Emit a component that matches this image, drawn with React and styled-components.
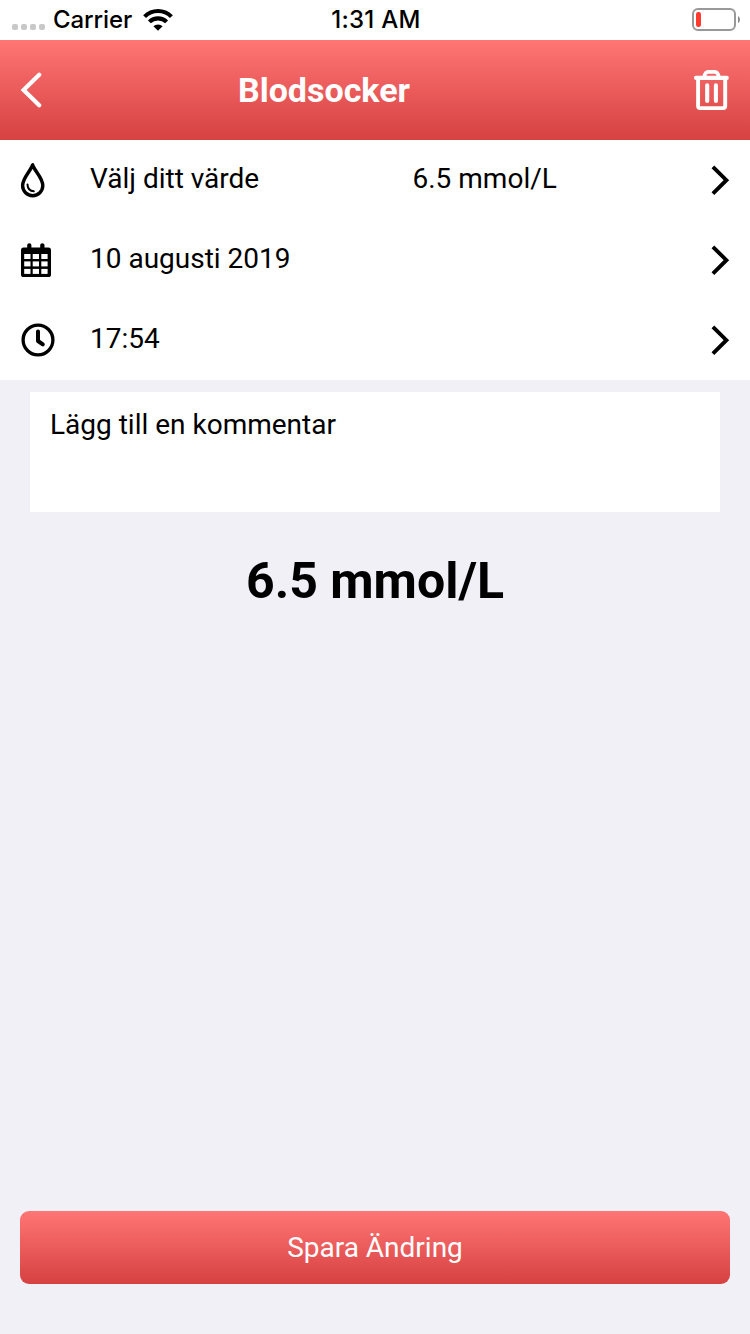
import styled, { createGlobalStyle } from "styled-components";

const GlobalStyle = createGlobalStyle`
  * {
    box-sizing: border-box;
  }
  body {
    margin: 0;
    background: #f1f0f7;
    font-family: Roboto, sans-serif;
    color: #000;
  }
`;

const Screen = styled.div`
  display: flex;
  flex-direction: column;
  width: 750px;
  height: 1334px;
`;

const StatusBar = styled.div`
  display: grid;
  grid-template-columns: 1fr auto 1fr;
  align-items: center;
  height: 40px;
  padding: 0 10px 0 12px;
  background: #fff;
  font-family: Inter, sans-serif;
  font-size: 24px;
  font-weight: 500;
  line-height: 40px;
`;
const StatusLeft = styled.div`
  display: flex;
  align-items: center;
`;
const Signal = styled.div`
  display: flex;
  gap: 3px;
  margin: 14px 8px 0 0;
`;
const Dot = styled.span`
  width: 6px;
  height: 6px;
  border-radius: 2px;
  background: #c8c8c8;
`;
const Carrier = styled.span`
  width: 79px;
  margin-right: 11px;
  letter-spacing: -0.1px;
`;
const Time = styled.span`
  letter-spacing: 0.3px;
`;
const StatusRight = styled.div`
  display: flex;
  justify-content: flex-end;
  margin-bottom: 1px;
`;

const Header = styled.header`
  display: grid;
  grid-template-columns: 1fr auto 1fr;
  align-items: center;
  height: 100px;
  padding: 0 20px;
  background: linear-gradient(#ff7675, #d64141);
  color: #fff;
`;
const Title = styled.h1`
  margin: 0 102px 0 0;
  font-size: 34px;
  font-weight: 700;
  line-height: 40px;
`;
const HeaderIcon = styled.div`
  display: flex;
  justify-content: ${({ $end }) => ($end ? "flex-end" : "flex-start")};
`;

const List = styled.div`
  background: #fff;
`;
const Row = styled.div`
  display: flex;
  align-items: center;
  height: 80px;
  padding: 0 20px;
  font-size: 28px;
`;
const RowIcon = styled.div`
  display: flex;
  width: 70px;
`;
const RowLabel = styled.div`
  width: 322.5px;
  line-height: 34px;
  margin-top: -3px;
`;
const RowValue = styled.div`
  flex: 1;
  line-height: 34px;
  margin-top: -3px;
`;

const Comment = styled.div`
  height: 120px;
  margin: 12px 30px 0;
  padding: 16px 20px;
  background: #fff;
  font-size: 28px;
  line-height: 33px;
`;
const Result = styled.div`
  margin-top: 39px;
  text-align: center;
  font-size: 50px;
  font-weight: 700;
  line-height: 60px;
`;
const SaveButton = styled.button`
  height: 73px;
  margin: auto 20px 50px;
  padding: 0;
  border: 0;
  border-radius: 9px;
  background: linear-gradient(#ff7675, #d64141);
  color: #fff;
  font: 400 28px/73px Roboto, sans-serif;
`;

const WifiIcon = () => (
  <svg width="30" height="22" viewBox="0 0 30 22">
    <path d="M15 21.8 L10.4 17.3 A6.6 6.6 0 0 1 19.6 17.3 Z" />
    <g fill="none" stroke="#000" strokeWidth="4.1">
      <path d="M1.6 7.6 A19 19 0 0 1 28.4 7.6" />
      <path d="M6.4 12.9 A12.2 12.2 0 0 1 23.6 12.9" />
    </g>
  </svg>
);

const BatteryIcon = () => (
  <svg width="48" height="23" viewBox="0 0 48 23">
    <rect x="1" y="1" width="42" height="21" rx="5" fill="none" stroke="#999" strokeWidth="2" />
    <rect x="4" y="4" width="5" height="15" rx="2.2" fill="#ff3b30" />
    <path d="M46 8 Q48 9 48 11.5 Q48 14 46 15 Z" fill="#888" />
  </svg>
);

const BackIcon = () => (
  <svg width="22" height="36" viewBox="0 0 22 36" fill="none" stroke="#fff">
    <path d="M19.2 2.7 L3.6 18 L19.2 33.3" strokeWidth="4.2" strokeLinecap="round" />
  </svg>
);

const TrashIcon = () => (
  <svg width="36" height="42" viewBox="0 0 36 42" fill="none" stroke="#fff">
    <path d="M2 8.9 H32.8" strokeWidth="4.1" strokeLinecap="round" />
    <path d="M10 8.4 C10.8 4.2 12 2.8 14.2 2.8 H20.8 C23 2.8 24.2 4.2 25 8.4" strokeWidth="3.8" />
    <path
      d="M4.1 10 V37 Q4.1 39.1 6.2 39.1 H29.1 Q31.2 39.1 31.2 37 V10"
      strokeWidth="3.9"
    />
    <path d="M13.2 16.2 V32 M21.9 16.2 V32" strokeWidth="4.1" strokeLinecap="round" />
  </svg>
);

const DropIcon = () => (
  <svg width="26" height="36" viewBox="0 0 26 36" fill="none" stroke="#000" strokeLinecap="round">
    <path
      d="M12.6 2.8 C11 8.8 2.6 15.6 2.6 23.6 A10.1 10.1 0 0 0 22.8 23.6 C22.8 15.6 14.2 8.8 12.6 2.8 Z"
      strokeWidth="3.4"
      strokeLinejoin="round"
    />
    <path d="M7.5 22.6 C7.7 26.4 10 29 13.8 29.2" strokeWidth="2" />
  </svg>
);

const CalendarIcon = () => (
  <svg width="32" height="36" viewBox="0 0 32 36">
    <path d="M7.2 3 Q7.2 1.2 9.3 1.2 T11.4 3 V5.6 H20.2 V3 Q20.2 1.2 22.3 1.2 T24.5 3 V5.6 H28.4 Q31 5.6 31 8.2 V32.4 Q31 35 28.4 35 H3.6 Q1 35 1 32.4 V8.2 Q1 5.6 3.6 5.6 H7.2 Z" />
    <g fill="#fff">
      {[12, 19.4, 26.9].map((y) =>
        [4.2, 12.7, 21.3].map((x) => (
          <rect key={`${x}-${y}`} x={x} y={y} width="6.3" height="5" />
        ))
      )}
    </g>
  </svg>
);

const ClockIcon = () => (
  <svg width="36" height="36" viewBox="0 0 36 36" fill="none" stroke="#000">
    <circle cx="18" cy="18" r="14.9" strokeWidth="3.3" />
    <path d="M18 9.5 V19 L22.8 22.4" strokeWidth="4" strokeLinecap="round" strokeLinejoin="round" />
  </svg>
);

const ForwardIcon = () => (
  <svg width="20" height="32" viewBox="0 0 20 32" fill="none" stroke="#000">
    <path d="M2.9 2.8 L16.4 16.2 L2.9 29.6" strokeWidth="3.9" />
  </svg>
);

const rows = [
  { icon: <DropIcon />, label: "Välj ditt värde", value: "6.5 mmol/L" },
  { icon: <CalendarIcon />, label: "10 augusti 2019" },
  { icon: <ClockIcon />, label: "17:54" },
];

const App = () => {
  return (
    <Screen>
      <GlobalStyle />
      <StatusBar>
        <StatusLeft>
          <Signal>
            <Dot />
            <Dot />
            <Dot />
            <Dot />
          </Signal>
          <Carrier>Carrier</Carrier>
          <WifiIcon />
        </StatusLeft>
        <Time>1:31 AM</Time>
        <StatusRight>
          <BatteryIcon />
        </StatusRight>
      </StatusBar>
      <Header>
        <HeaderIcon>
          <BackIcon />
        </HeaderIcon>
        <Title>Blodsocker</Title>
        <HeaderIcon $end>
          <TrashIcon />
        </HeaderIcon>
      </Header>
      <List>
        {rows.map((r) => (
          <Row key={r.label}>
            <RowIcon>{r.icon}</RowIcon>
            <RowLabel>{r.label}</RowLabel>
            <RowValue>{r.value}</RowValue>
            <ForwardIcon />
          </Row>
        ))}
      </List>
      <Comment>Lägg till en kommentar</Comment>
      <Result>6.5 mmol/L</Result>
      <SaveButton>Spara Ändring</SaveButton>
    </Screen>
  );
};

export default App;
